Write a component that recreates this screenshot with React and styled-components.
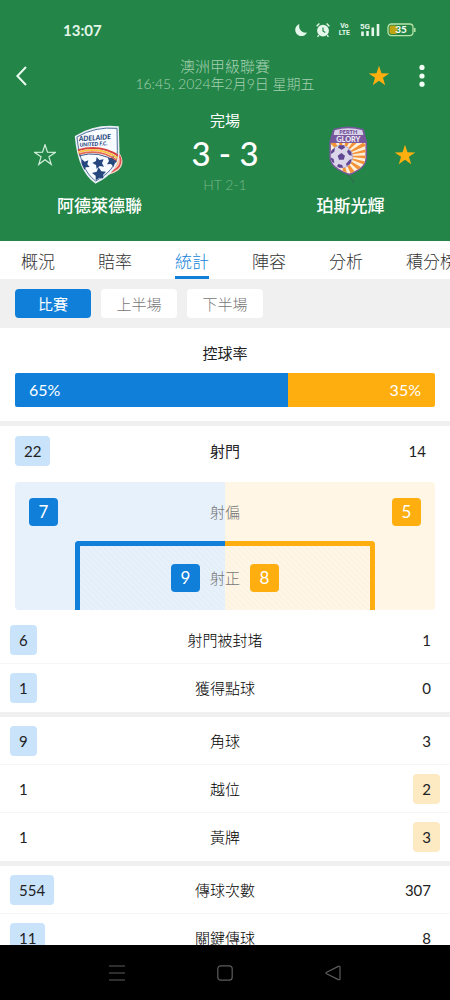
import { useState } from "react";
import styled, { ThemeProvider, createGlobalStyle } from "styled-components";

const theme = {
  colors: {
    GREEN: "#238547",
    BLUE: "#107fda",
    ORANGE: "#ffae0f",
    BLUE_SOFT: "#c9e3fb",
    ORANGE_SOFT: "#fde9c2",
    GRAY_BG: "#f0f0f0",
    TEXT: "#222",
  },
};

const tabs = ["概況", "賠率", "統計", "陣容", "分析", "積分榜"];
const periods = ["比賽", "上半場", "下半場"];
const possession = { home: 65, away: 35 };
const statGroups = [
  [
    { label: "射門被封堵", home: 6, away: 1 },
    { label: "獲得點球", home: 1, away: 0 },
  ],
  [
    { label: "角球", home: 9, away: 3 },
    { label: "越位", home: 1, away: 2 },
    { label: "黃牌", home: 1, away: 3 },
  ],
  [
    { label: "傳球次數", home: 554, away: 307 },
    { label: "關鍵傳球", home: 11, away: 8 },
  ],
];

const STAR_POINTS =
  "12,0.8 14.7,9 23.2,9.2 16.3,14 18.8,22.2 12,17.2 5.2,22.2 7.7,14 0.8,9.2 9.3,9";

const StarIcon = ({ filled }) => (
  <svg width="22" height="22" viewBox="0 0 24 24" aria-hidden="true">
    <polygon
      points={STAR_POINTS}
      fill={filled ? "#ffae0f" : "none"}
      stroke={filled ? "none" : "#d3f0dc"}
      strokeWidth="1.3"
    />
  </svg>
);

const StatusIcons = () => (
  <>
    <svg width="12" height="14" viewBox="0 0 12 14">
      <path d="M4.4 1A6.2 6.2 0 1 0 12 9.6C7.2 10.6 3 6.4 4.4 1Z" fill="#e4f7ea" />
    </svg>
    <AlarmSvg width="14" height="16" viewBox="0 0 14 16">
      <circle cx="7" cy="8.6" r="5.9" fill="#e4f7ea" />
      <path d="M7 5.5V9L9.3 10.4" fill="none" stroke="#238547" strokeWidth="1.2" />
      <path
        d="M.6 4.2L3.4 1.6M13.4 4.2L10.6 1.6M2.8 13.2L1.6 14.8M11.2 13.2L12.4 14.8"
        stroke="#e4f7ea"
        strokeWidth="1.4"
      />
    </AlarmSvg>
    <Volte>
      <span>Vo</span>
      <span>LTE</span>
    </Volte>
    <svg width="21" height="16" viewBox="0 0 21 16">
      <text x="0" y="7" fontSize="8" fontWeight="700" fontFamily="Roboto, sans-serif" fill="#e4f7ea">
        5G
      </text>
      <path d="M2.5 9.5V14M7.5 9V14M12.8 5.5V14M18 2V14" stroke="#e4f7ea" strokeWidth="2.6" />
    </svg>
    <svg width="29" height="14" viewBox="0 0 29 14">
      <rect x="1" y="1" width="25" height="11.6" rx="3.4" fill="none" stroke="#b9e3a9" strokeWidth="1.3" />
      <rect x="2.5" y="2.5" width="8" height="8.6" rx="2" fill="#c0a512" />
      <path d="M27.8 5v4" stroke="#b9e3a9" strokeWidth="1.5" />
      <text x="14" y="10.4" textAnchor="middle" fontSize="10" fontWeight="900" fontFamily="Lato, sans-serif" fill="#f0fbf3">
        35
      </text>
    </svg>
  </>
);

const AdelaideLogo = () => (
  <svg width="60" height="68" viewBox="0 0 180 204" role="img" aria-label="阿德萊德聯">
    <clipPath id="adelaide-shield">
      <path d="M18 50Q75 15 143 22L145 92C147 142 110 170 77 187C42 163 24 120 18 50Z" />
    </clipPath>
    <path d="M136 88C168 112 167 154 114 165L118 150Q142 138 130 104Z" fill="#f4d3c8" />
    <path d="M138 94C160 116 158 146 116 157" fill="none" stroke="#e2504d" strokeWidth="5" />
    <path d="M132 100C150 118 148 138 118 150" fill="none" stroke="#f6b35a" strokeWidth="4" />
    <path
      d="M18 50Q75 15 143 22L145 92C147 142 110 170 77 187C42 163 24 120 18 50Z"
      fill="#fff"
      stroke="#e9f0f7"
      strokeWidth="7"
    />
    <path
      d="M21 51Q75 19 141 25L142 92C144 138 108 166 77 183C46 160 28 120 21 51Z"
      fill="#f8fbff"
      stroke="#4f7199"
      strokeWidth="3"
    />
    <g clipPath="url(#adelaide-shield)">
      <g fill="#25477d">
        <path d="M86 142l8 12 14 1-9 10 3 13-13-5-12 8 0-14-11-8 14-4Z" />
        <path d="M80 111l8 9 13-2-5 12 6 10-13-2-9 9-2-12-11-6 11-6Z" />
        <path d="M36 118l8 7 11-4-3 12 7 8-12 1-5 10-6-11-11 0 8-9Z" />
        <path d="M113 112l10 2 8-8 2 12 12 5-12 6-2 12-8-9-12 1 6-10Z" />
      </g>
      <path d="M22 91Q92 70 148 109" fill="none" stroke="#d8443f" strokeWidth="6" />
      <path d="M23 97Q90 76 146 116" fill="none" stroke="#f7c548" strokeWidth="6" />
      <path d="M24 103Q90 83 142 122" fill="none" stroke="#e56a54" strokeWidth="5" />
      <path d="M25 108Q88 89 138 127" fill="none" stroke="#3b5587" strokeWidth="3" />
    </g>
    <g fontFamily="Lato, sans-serif" fontWeight="900" fontStyle="italic" fill="#25477d">
      <text x="27" y="64" fontSize="21" transform="rotate(-4 27 64)">ADELAIDE</text>
      <text x="29" y="80" fontSize="16" transform="rotate(-3 29 80)">UNITED F.C.</text>
    </g>
  </svg>
);

const PerthLogo = () => (
  <svg width="60" height="68" viewBox="-4 0 180 204" role="img" aria-label="珀斯光輝">
    <clipPath id="perth-body">
      <path d="M25 68H130V112C128 140 108 150 81 161C45 148 27 134 25 112Z" />
    </clipPath>
    <path
      d="M34 29Q78 14 123 29L132 66V112C130 140 110 151 82 164C44 150 25 136 23 112V66Z"
      fill="#77589d"
      stroke="#77589d"
      strokeWidth="4"
    />
    <g clipPath="url(#perth-body)">
      <rect x="20" y="68" width="115" height="100" fill="#fff0d9" />
      <path
        d="M60 108L48 62H60ZM60 108L70 60H84ZM60 108L96 60 108 64ZM60 108L122 68 134 76ZM60 108L136 86V96ZM60 108L138 106V116ZM60 108L134 126 130 136ZM60 108L120 144 110 152ZM60 108L100 158 88 166ZM60 108L76 168H62ZM60 108L24 70 36 60Z"
        fill="#f39237"
      />
      <circle cx="57" cy="110" r="34" fill="#dcd6eb" stroke="#aaa1c5" strokeWidth="2" />
      <g fill="#5f4791">
        <path d="M57 99l11 8-4 12H50l-4-12Z" />
        <path d="M50 76h15l3 7-10 6-11-6Z" />
        <path d="M78 88l9 8 1 11-8-2-6-10Z" />
        <path d="M82 119l6-2-4 14-11 7-2-7Z" />
        <path d="M48 132l12 3 2 8-10 0-8-4Z" />
        <path d="M25 112l9 5 2 11-5 0-7-10Z" />
        <path d="M29 89l9-5-2 11-8 6-4-2Z" />
      </g>
    </g>
    <path d="M37 31Q78 18 120 31L123 45H34Z" fill="#d9d3e8" />
    <g fontFamily="Lato, sans-serif" fontWeight="900" textAnchor="middle">
      <text x="78" y="42" fontSize="17" fill="#6d4d97">PERTH</text>
      <text x="78" y="65" fontSize="22" fill="#efeaf7">GLORY</text>
    </g>
    <path d="M77 164L92 182 94 190" fill="none" stroke="#3a6357" strokeWidth="3" />
  </svg>
);

const StatRow = ({ stat }) => (
  <tr>
    <td>
      <Value $side={stat.home > stat.away ? "home" : null}>{stat.home}</Value>
    </td>
    <th scope="row">{stat.label}</th>
    <td>
      <Value $side={stat.away > stat.home ? "away" : null}>{stat.away}</Value>
    </td>
  </tr>
);

const App = () => {
  const [tab, setTab] = useState("統計");
  const [period, setPeriod] = useState("比賽");

  return (
    <ThemeProvider theme={theme}>
      <GlobalStyle />
      <Screen>
        <Header>
          <StatusBar>
            <Clock>13:07</Clock>
            <StatusIcons />
          </StatusBar>
          <TopBar>
            <IconButton aria-label="返回">
              <svg width="12" height="20" viewBox="0 0 12 20">
                <path d="M10 1L1.4 10L10 19" fill="none" stroke="#e9fbef" strokeWidth="2" />
              </svg>
            </IconButton>
            <MatchInfo>
              <div className="league">澳洲甲級聯賽</div>
              <div className="date">16:45, 2024年2月9日 星期五</div>
            </MatchInfo>
            <Actions>
              <IconButton aria-label="收藏比賽">
                <StarIcon filled />
              </IconButton>
              <IconButton aria-label="更多">
                <svg width="24" height="24" viewBox="0 0 24 24" fill="#f1fdf5">
                  <circle cx="12" cy="3.4" r="2.6" />
                  <circle cx="12" cy="12" r="2.6" />
                  <circle cx="12" cy="20.2" r="2.6" />
                </svg>
              </IconButton>
            </Actions>
          </TopBar>
          <Match>
            <FavoriteButton aria-label="收藏阿德萊德聯">
              <StarIcon />
            </FavoriteButton>
            <Team>
              <AdelaideLogo />
              <div className="teamName">阿德萊德聯</div>
            </Team>
            <Score>
              <div className="state">完場</div>
              <div className="result">3 - 3</div>
              <div className="half">HT 2-1</div>
            </Score>
            <Team>
              <PerthLogo />
              <div className="teamName">珀斯光輝</div>
            </Team>
            <FavoriteButton aria-label="收藏珀斯光輝">
              <StarIcon filled />
            </FavoriteButton>
          </Match>
        </Header>
        <Tabs>
          {tabs.map((name) => (
            <Tab key={name} $active={name === tab} onClick={() => setTab(name)}>
              {name}
            </Tab>
          ))}
        </Tabs>
        <Periods>
          {periods.map((name) => (
            <Period key={name} $active={name === period} onClick={() => setPeriod(name)}>
              {name}
            </Period>
          ))}
        </Periods>
        <Content>
          <Possession>
            <SectionTitle>控球率</SectionTitle>
            <Bar>
              <BarPart $side="home" style={{ width: `${possession.home}%` }}>
                {possession.home}%
              </BarPart>
              <BarPart $side="away" style={{ width: `${possession.away}%` }}>
                {possession.away}%
              </BarPart>
            </Bar>
          </Possession>
          <Divider />
          <Shots>
            <ShotsTotal>
              <Value $side="home">22</Value>
              <SectionTitle>射門</SectionTitle>
              <Value>14</Value>
            </ShotsTotal>
            <Pitch>
              <OffTarget>
                <Badge $side="home">7</Badge>
                <ShotLabel>射偏</ShotLabel>
                <Badge $side="away">5</Badge>
              </OffTarget>
              <Goal>
                <GoalHalf $side="home" />
                <GoalHalf $side="away" />
                <OnTarget>
                  <Badge $side="home">9</Badge>
                  <ShotLabel>射正</ShotLabel>
                  <Badge $side="away">8</Badge>
                </OnTarget>
              </Goal>
            </Pitch>
          </Shots>
          {statGroups.map((group, i) => (
            <div key={group[0].label}>
              {i > 0 && <Divider />}
              <StatTable>
                <tbody>
                  {group.map((stat) => (
                    <StatRow key={stat.label} stat={stat} />
                  ))}
                </tbody>
              </StatTable>
            </div>
          ))}
        </Content>
        <SystemNav>
          <IconButton aria-label="最近">
            <svg width="16" height="16" viewBox="0 0 16 16">
              <path d="M0 1h16M0 8h16M0 15h16" stroke="#5c5c5c" strokeWidth="1.2" />
            </svg>
          </IconButton>
          <IconButton aria-label="主頁">
            <svg width="16" height="16" viewBox="0 0 16 16">
              <rect x=".8" y=".8" width="14.4" height="14.4" rx="3" fill="none" stroke="#5c5c5c" strokeWidth="1.2" />
            </svg>
          </IconButton>
          <IconButton aria-label="上一頁">
            <svg width="16" height="16" viewBox="0 0 16 16">
              <path
                d="M13.4 1.4L1.6 7.2Q.4 8 1.6 8.8L13.4 14.6Q15 15.2 15 13.6V2.4Q15 .8 13.4 1.4Z"
                fill="none"
                stroke="#5c5c5c"
                strokeWidth="1.2"
              />
            </svg>
          </IconButton>
        </SystemNav>
      </Screen>
    </ThemeProvider>
  );
};

export default App;

const sideColor = ({ theme, $side }) =>
  $side === "home" ? theme.colors.BLUE : theme.colors.ORANGE;

const GlobalStyle = createGlobalStyle`
  * {
    box-sizing: border-box;
  }
  body {
    margin: 0;
    font-family: Lato, "Noto Sans CJK TC", sans-serif;
    color: ${({ theme }) => theme.colors.TEXT};
  }
  button {
    border: none;
    padding: 0;
    background: none;
    font-family: inherit;
    cursor: pointer;
  }
  svg {
    display: block;
    flex-shrink: 0;
  }
`;

const Screen = styled.div`
  display: flex;
  flex-direction: column;
  height: 100vh;
  overflow: hidden;
  background-color: white;
`;

const Header = styled.header`
  flex-shrink: 0;
  padding-bottom: 23px;
  background-color: ${({ theme }) => theme.colors.GREEN};
  color: white;
`;

const StatusBar = styled.div`
  display: flex;
  align-items: center;
  height: 56px;
  padding: 4px 34px 0 63px;
`;

const Clock = styled.div`
  margin-right: auto;
  font-size: 15px;
  font-weight: 700;
  color: #e4f7ea;
`;

const AlarmSvg = styled.svg`
  margin: 0 9px;
`;

const Volte = styled.div`
  display: flex;
  flex-direction: column;
  align-items: center;
  margin-right: 10px;
  font-family: Roboto, sans-serif;
  font-size: 7px;
  font-weight: 700;
  line-height: 7px;
  color: #e4f7ea;

  & + svg {
    margin-right: 6px;
  }
`;

const TopBar = styled.div`
  display: grid;
  grid-template-columns: 1fr auto 1fr;
  align-items: center;
  height: 40px;
  padding: 0 16px;
`;

const IconButton = styled.button`
  display: flex;
  align-items: center;
`;

const MatchInfo = styled.div`
  padding-bottom: 2px;
  text-align: center;
  font-weight: 300;
  line-height: 17px;
  color: #a5d0b2;

  .league {
    font-size: 15px;
  }
  .date {
    font-size: 14px;
  }
`;

const Actions = styled.div`
  display: flex;
  justify-content: flex-end;
  gap: 20px;
`;

const Match = styled.div`
  display: grid;
  grid-template-columns: 22px 87px 1fr 87px 22px;
  align-items: start;
  margin-top: 12px;
  padding: 0 34px;
`;

const FavoriteButton = styled(IconButton)`
  margin-top: 36px;
`;

const Team = styled.div`
  display: flex;
  flex-direction: column;
  align-items: center;
  padding-top: 12px;

  .teamName {
    margin-top: 6px;
    font-size: 17px;
    font-weight: 500;
    line-height: 24px;
    white-space: nowrap;
  }
`;

const Score = styled.div`
  text-align: center;

  .state {
    font-size: 15px;
    line-height: 24px;
  }
  .result {
    font-size: 33px;
    font-weight: 500;
    line-height: 42px;
  }
  .half {
    font-size: 14px;
    font-weight: 300;
    line-height: 22px;
    color: #79b78c;
  }
`;

const Tabs = styled.nav`
  display: flex;
  flex-shrink: 0;
  gap: 43px;
  height: 38px;
  padding-left: 21px;
  overflow: hidden;
`;

const Tab = styled.button`
  flex-shrink: 0;
  border-top: 3px solid transparent;
  border-bottom: 3px solid
    ${({ theme, $active }) => ($active ? theme.colors.BLUE : "transparent")};
  font-size: 17px;
  font-weight: 300;
  color: ${({ theme, $active }) => ($active ? theme.colors.BLUE : "#333")};
`;

const Periods = styled.div`
  display: flex;
  flex-shrink: 0;
  gap: 10px;
  padding: 10px 15px;
  background-color: ${({ theme }) => theme.colors.GRAY_BG};
`;

const Period = styled.button`
  width: 76px;
  height: 29px;
  border-radius: 4px;
  background-color: ${({ theme, $active }) => ($active ? theme.colors.BLUE : "white")};
  font-size: 15px;
  font-weight: ${({ $active }) => ($active ? 400 : 300)};
  color: ${({ $active }) => ($active ? "white" : "#777")};
`;

const Content = styled.main`
  flex: 1;
  min-height: 0;
  overflow: hidden;
`;

const Divider = styled.div`
  height: 5px;
  background-color: ${({ theme }) => theme.colors.GRAY_BG};
`;

const SectionTitle = styled.h2`
  margin: 0;
  text-align: center;
  font-size: 15px;
  font-weight: 400;
  line-height: 20px;
`;

const Possession = styled.section`
  padding: 15px 15px 14px;
`;

const Bar = styled.div`
  display: flex;
  height: 34px;
  margin-top: 10px;
  border-radius: 2px;
  overflow: hidden;
`;

const BarPart = styled.div`
  padding: 0 14px;
  background-color: ${sideColor};
  text-align: ${({ $side }) => ($side === "home" ? "left" : "right")};
  font-size: 16px;
  line-height: 34px;
  color: white;
`;

const Shots = styled.section`
  padding: 10px 15px 6px;
`;

const ShotsTotal = styled.div`
  display: grid;
  grid-template-columns: 1fr auto 1fr;
  align-items: center;

  & > :last-child {
    justify-self: end;
  }
  & > :first-child {
    justify-self: start;
  }
`;

const Value = styled.span`
  display: inline-block;
  padding: 0 9px;
  border-radius: 4px;
  background-color: ${({ theme, $side }) =>
    $side === "home"
      ? theme.colors.BLUE_SOFT
      : $side === "away"
        ? theme.colors.ORANGE_SOFT
        : "transparent"};
  font-size: 15px;
  font-weight: 400;
  line-height: 30px;
`;

const Pitch = styled.div`
  margin-top: 16px;
  padding-top: 16px;
  border-radius: 4px;
  background: linear-gradient(90deg, #e6f1fc 50%, #fff6e5 50%);
`;

const OffTarget = styled.div`
  display: flex;
  justify-content: space-between;
  align-items: center;
  padding: 0 14px;
`;

const Badge = styled.span`
  width: 29px;
  border-radius: 4px;
  background-color: ${sideColor};
  text-align: center;
  font-size: 17px;
  line-height: 28px;
  color: white;
`;

const ShotLabel = styled.span`
  font-size: 15px;
  font-weight: 300;
  line-height: 20px;
  color: #777;
`;

const Goal = styled.div`
  display: grid;
  grid-template-columns: 1fr 1fr;
  width: 300px;
  margin: 15px auto 0;
`;

const GoalHalf = styled.div`
  grid-row: 1;
  grid-column: ${({ $side }) => ($side === "home" ? 1 : 2)};
  border-top: 5px solid ${sideColor};
  ${({ $side }) => ($side === "home" ? "border-left" : "border-right")}: 5px solid ${sideColor};
  ${({ $side }) =>
    $side === "home" ? "border-top-left-radius" : "border-top-right-radius"}: 4px;
  background: repeating-linear-gradient(
    45deg,
    rgba(0, 0, 0, 0.012) 0 2px,
    transparent 2px 4px
  );
`;

const OnTarget = styled.div`
  display: flex;
  grid-row: 1;
  grid-column: 1 / 3;
  justify-content: center;
  align-items: center;
  gap: 10px;
  padding: 23px 0 18px;
`;

const StatTable = styled.table`
  width: 100%;
  border-spacing: 0;
  table-layout: fixed;

  td,
  th {
    height: 48px;
    padding: 0 10px;
    text-align: left;
    font-size: 15px;
    line-height: 30px;
  }
  th {
    font-weight: 300;
    text-align: center;
    color: black;
  }
  td:last-child {
    text-align: right;
  }
  tr:not(:last-child) > * {
    border-bottom: 1px solid #f6f6f6;
  }
`;

const SystemNav = styled.nav`
  display: flex;
  flex-shrink: 0;
  justify-content: center;
  align-items: center;
  gap: 92px;
  height: 55px;
  background-color: black;
`;
